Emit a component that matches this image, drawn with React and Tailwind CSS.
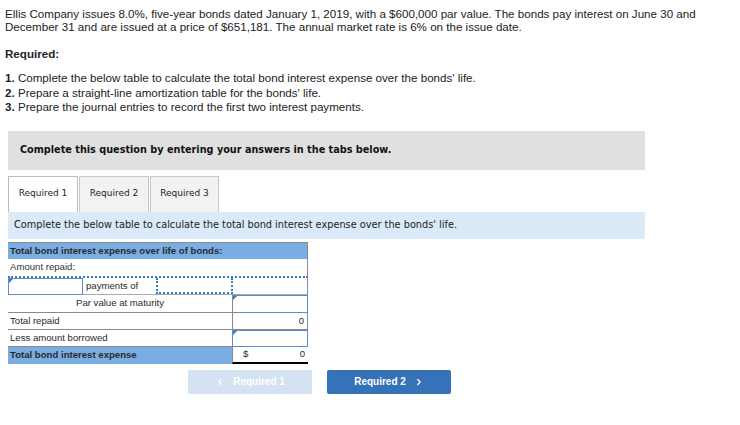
import React from 'react';
import { ChevronLeft, ChevronRight } from 'lucide-react';

const Corner = () => (
  <span className="absolute left-0 top-0 w-0 h-0 border-t-[4px] border-r-[4px] border-t-[#3a78c3] border-r-transparent" />
);

const InputBox = ({ className = '' }) => (
  <div className={`relative bg-white border border-[#5b8cc7] ${className}`}>
    <Corner />
  </div>
);

export default function App() {
  return (
    <div className="w-[740px] h-[425px] bg-white text-[#222] font-['Liberation_Sans',Arial,sans-serif] overflow-hidden">
      <div className="px-[5px] pt-[7px] text-[11.6px] leading-[13px]">
        <p>
          Ellis Company issues 8.0%, five-year bonds dated January 1, 2019, with a $600,000 par value. The bonds pay interest on June 30 and
          <br />
          December 31 and are issued at a price of $651,181. The annual market rate is 6% on the issue date.
        </p>
        <p className="mt-[14px] font-bold">Required:</p>
        <div className="mt-[11px] leading-[14.5px]">
          <p><b>1.</b> Complete the below table to calculate the total bond interest expense over the bonds' life.</p>
          <p><b>2.</b> Prepare a straight-line amortization table for the bonds' life.</p>
          <p><b>3.</b> Prepare the journal entries to record the first two interest payments.</p>
        </div>
      </div>

      <div className="ml-[8px] w-[637px]">
        <div className="mt-[16px] h-[39px] bg-[#e0e0e0] flex items-center px-[12px] font-['DejaVu_Sans',Verdana,sans-serif] font-bold text-[9.7px] text-[#111]">
          Complete this question by entering your answers in the tabs below.
        </div>

        <div className="mt-[6px] flex gap-[1px] font-['DejaVu_Sans',Tahoma,sans-serif] text-[9px] text-[#222]">
          <div className="w-[70px] h-[36px] flex items-center justify-center bg-white border border-b-0 border-[#bdbdbd]">Required 1</div>
          <div className="w-[70px] h-[36px] flex items-center justify-center bg-[#f2f2f2] border border-b-0 border-[#c8c8c8]">Required 2</div>
          <div className="w-[69px] h-[36px] flex items-center justify-center bg-[#f2f2f2] border border-b-0 border-[#c8c8c8]">Required 3</div>
        </div>

        <div className="h-[27px] bg-[#daeaf8] flex items-center px-[6px] font-['DejaVu_Sans',Tahoma,sans-serif] text-[9.75px] text-[#222]">
          Complete the below table to calculate the total bond interest expense over the bonds' life.
        </div>

        <div className="mt-[3px] w-[300px] text-[9.6px] leading-[10px] text-[#2a2a2a]">
          <div className="h-[17px] bg-[#79ade3] border-t border-r border-[#8a8a8a] flex items-center px-[2px] font-bold">
            Total bond interest expense over life of bonds:
          </div>
          <div className="h-[17px] border-r border-[#8a8a8a] flex items-center px-[2px] text-[#333]">
            Amount repaid:
          </div>
          <div className="h-[18px] flex border-t-2 border-dotted border-[#3a78c3]">
            <InputBox className="w-[75px] h-[17px]" />
            <div className="w-[73px] flex items-center px-[3px]">payments of</div>
            <div className="w-[77px] border-l-2 border-r-2 border-b-2 border-dotted border-[#3a78c3]" />
            <div className="flex-1 border-r border-[#8a8a8a]" />
          </div>
          <div className="h-[18px] flex border-t border-[#aaa]">
            <div className="w-[224px] flex items-center justify-center">Par value at maturity</div>
            <InputBox className="flex-1 h-[18px] border-l-[#8a8a8a]" />
          </div>
          <div className="h-[17px] flex border-t border-[#8a8a8a]">
            <div className="w-[224px] flex items-center px-[2px]">Total repaid</div>
            <div className="flex-1 flex items-center justify-end px-[3px] border-l border-r border-[#8a8a8a]">0</div>
          </div>
          <div className="h-[17px] flex border-t border-[#8a8a8a]">
            <div className="w-[224px] flex items-center px-[2px]">Less amount borrowed</div>
            <InputBox className="flex-1 h-[17px]" />
          </div>
          <div className="h-[18px] flex border-t border-[#8a8a8a]">
            <div className="w-[224px] bg-[#79ade3] flex items-center px-[2px] font-bold">Total bond interest expense</div>
            <div className="flex-1 flex items-center justify-between pl-[10px] pr-[3px] border-l border-[#8a8a8a] border-b-2 border-b-black">
              <span>$</span>
              <span>0</span>
            </div>
          </div>
        </div>
      </div>

      <div className="mt-[6px] ml-[188px] flex gap-[15px] font-['Liberation_Sans',Arial,sans-serif] text-[10px] font-bold">
        <div className="w-[124px] h-[24px] rounded-[2px] bg-[#d5e2f1] text-white flex items-center justify-center gap-[8px]">
          <ChevronLeft size={10} strokeWidth={3} /> Required 1
        </div>
        <div className="w-[124px] h-[24px] rounded-[2px] bg-[#3572b8] text-white flex items-center justify-center gap-[8px]">
          Required 2 <ChevronRight size={10} strokeWidth={3} />
        </div>
      </div>
    </div>
  );
}
